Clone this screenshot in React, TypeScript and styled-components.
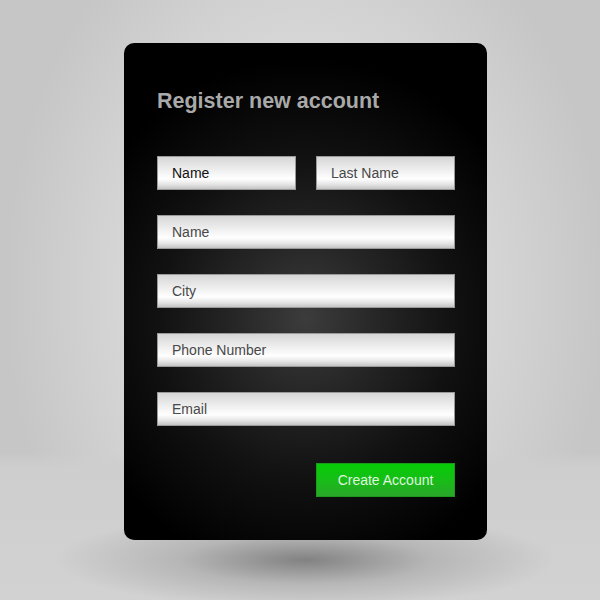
import React from 'react'
import styled, { createGlobalStyle } from 'styled-components'

const GlobalStyle = createGlobalStyle`
  html, body {
    margin: 0;
    padding: 0;
  }
  body {
    font-family: "Liberation Sans", Arial, sans-serif;
  }
`

const Stage = styled.div`
  width: 600px;
  height: 600px;
  overflow: hidden;
  box-sizing: border-box;
  padding: 43px 0 0 124px;
  background:
    radial-gradient(ellipse 250px 48px at 305px 560px, rgba(110, 110, 110, 0.8), rgba(150, 150, 150, 0.45) 50%, rgba(200, 200, 200, 0) 100%),
    linear-gradient(to bottom, rgba(206, 206, 206, 0) 0, rgba(206, 206, 206, 0) 452px, #cecece 468px, #d2d2d2 600px),
    radial-gradient(ellipse 300px 420px at 305px 290px, #e4e4e4 0, #dadada 50%, #c6c6c6 100%);
  background-color: #c6c6c6;
`

const Card = styled.form`
  width: 363px;
  height: 497px;
  box-sizing: border-box;
  padding: 46px 32px 0 33px;
  border-radius: 10px;
  background: radial-gradient(ellipse 240px 260px at 182px 275px, #3c3c3c 0, #262626 30%, #111 62%, #000 100%);
  display: flex;
  flex-direction: column;
`

const Title = styled.h1`
  margin: 0 0 43px;
  font-size: 21.5px;
  line-height: 24px;
  font-weight: bold;
  color: #a9a9a9;
`

const Fields = styled.div`
  display: grid;
  grid-template-columns: 139px 139px;
  column-gap: 20px;
  row-gap: 25px;
`

const Field = styled.input<{ $wide?: boolean; $filled?: boolean }>`
  grid-column: ${({ $wide }) => ($wide ? '1 / -1' : 'auto')};
  height: 34px;
  box-sizing: border-box;
  margin: 0;
  padding: 0 0 0 14px;
  border: 1px solid #9a9a9a;
  border-radius: 0;
  outline: none;
  font-family: "Liberation Sans", Arial, sans-serif;
  font-size: 14px;
  color: ${({ $filled }) => ($filled ? '#111' : '#444')};
  background: linear-gradient(
    to bottom,
    #d6d6d6 0%,
    #e8e8e8 30%,
    #f7f7f7 55%,
    #ffffff 68%,
    #e6e6e6 85%,
    #c4c4c4 100%
  );

  &::placeholder {
    color: #484848;
    opacity: 1;
  }
`

const Actions = styled.div`
  display: flex;
  justify-content: flex-end;
  margin-top: 37px;
`

const SubmitButton = styled.button`
  width: 139px;
  height: 34px;
  margin: 0;
  padding: 0;
  border: 1px solid #1c9a1c;
  border-radius: 0;
  font-family: "Liberation Sans", Arial, sans-serif;
  font-size: 14px;
  color: #dff5df;
  background: linear-gradient(to bottom, #06cb06 0%, #15bf15 45%, #2aa72a 100%);
  cursor: pointer;
`

export default function App() {
  return (
    <>
      <GlobalStyle />
      <Stage>
        <Card onSubmit={e => e.preventDefault()}>
          <Title>Register new account</Title>
          <Fields>
            <Field $filled defaultValue="Name" />
            <Field placeholder="Last Name" />
            <Field $wide placeholder="Name" />
            <Field $wide placeholder="City" />
            <Field $wide placeholder="Phone Number" />
            <Field $wide placeholder="Email" />
          </Fields>
          <Actions>
            <SubmitButton type="submit">Create Account</SubmitButton>
          </Actions>
        </Card>
      </Stage>
    </>
  )
}
